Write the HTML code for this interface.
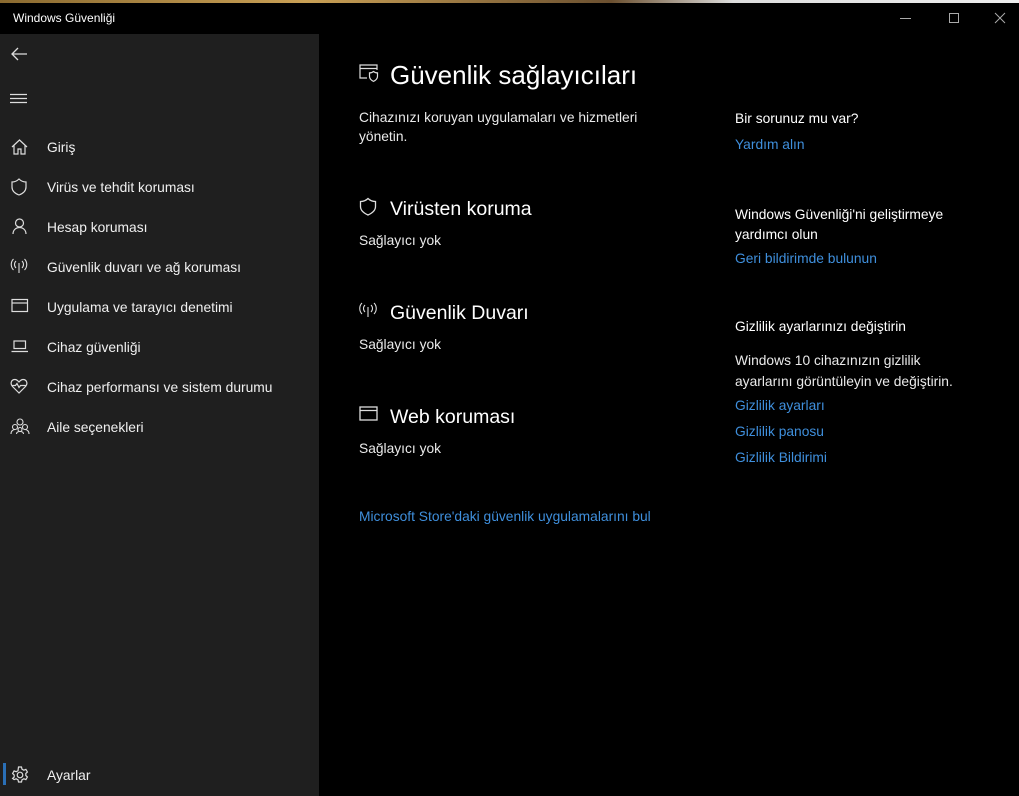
<!DOCTYPE html>
<html><head><meta charset="utf-8"><style>
*{margin:0;padding:0;box-sizing:border-box}
body{width:1019px;height:796px;background:#000;font-family:"Liberation Sans",sans-serif;color:#fff;position:relative;overflow:hidden}
.a{position:absolute;white-space:nowrap}
.top{position:absolute;left:0;top:0;width:1019px;height:3px;background:linear-gradient(90deg,#8a6a30,#c9a055 30%,#6b5030 60%,#ddd 72%,#eee)}
.side{position:absolute;left:0;top:34px;width:319px;height:762px;background:#1f1f1f}
.nav{font-size:13.8px;color:#f0f0f0}
.ic{position:absolute}
.lk{color:#3f8fdc;font-size:13.8px}
.t{font-size:13.8px;color:#eaeaea}
.h2{font-size:19.5px;color:#fff}
</style></head><body>
<div class="top"></div>
<div class="a" style="left:13px;top:11px;font-size:12px;color:#fff">Windows Güvenliği</div>
<svg class="ic" style="left:900px;top:12px" width="110" height="14" fill="none" stroke="#aaa" stroke-width="1"><path d="M0 6.5h11"/><rect x="49.5" y="1.5" width="9" height="9"/><path d="M95 1l10 10M105 1l-10 10"/></svg>
<div class="side"></div>
<svg class="ic" style="left:10px;top:46px" width="18" height="16" fill="none" stroke="#ddd" stroke-width="1.3"><path d="M17 8H2M8 2L2 8l6 6"/></svg>
<svg class="ic" style="left:10px;top:93px" width="18" height="12" stroke="#ddd" stroke-width="1.2"><path d="M0 1.5h17M0 5.5h17M0 9.5h17"/></svg>
<svg class="ic" style="left:11px;top:139px" width="17" height="16" fill="none" stroke="#ddd" stroke-width="1.2"><path d="M1 8L8.5 1 16 8M3 6.5V15h4v-5h3v5h4V6.5"/></svg>
<div class="a nav" style="left:47px;top:140px">Giriş</div>
<svg class="ic" style="left:11px;top:178px" width="16" height="18" fill="none" stroke="#ddd" stroke-width="1.2"><path d="M8 1C6 3 3 4 1 4v5c0 4 3 6.5 7 8 4-1.5 7-4 7-8V4c-2 0-5-1-7-3z"/></svg>
<div class="a nav" style="left:47px;top:180px">Virüs ve tehdit koruması</div>
<svg class="ic" style="left:12px;top:218px" width="16" height="17" fill="none" stroke="#ddd" stroke-width="1.2"><circle cx="7.5" cy="5" r="4"/><path d="M1 16c0-4 3-6.5 6.5-6.5S14 12 14 16"/></svg>
<div class="a nav" style="left:47px;top:220px">Hesap koruması</div>
<svg class="ic" style="left:10px;top:258px" width="18" height="16" fill="none" stroke="#ddd" stroke-width="1.1"><path d="M9 5v10M6 3c-2 2-2 5 0 7M12 3c2 2 2 5 0 7M3.5 1c-3 3-3 8 0 11M14.5 1c3 3 3 8 0 11"/></svg>
<div class="a nav" style="left:47px;top:260px">Güvenlik duvarı ve ağ koruması</div>
<svg class="ic" style="left:11px;top:298px" width="18" height="16" fill="none" stroke="#ddd" stroke-width="1.2"><rect x="1" y="1.5" width="15.5" height="12"/><path d="M1 5h15.5"/></svg>
<div class="a nav" style="left:47px;top:300px">Uygulama ve tarayıcı denetimi</div>
<svg class="ic" style="left:11px;top:340px" width="18" height="14" fill="none" stroke="#ddd" stroke-width="1.2"><rect x="3" y="1" width="11.5" height="7.5"/><path d="M0.5 11.5h16.5"/></svg>
<div class="a nav" style="left:47px;top:340px">Cihaz güvenliği</div>
<svg class="ic" style="left:10px;top:378px" width="18" height="16" fill="none" stroke="#ddd" stroke-width="1.2"><path d="M9 15L2.5 8.5C0 6 1 1.5 5 1.5c2 0 3 1.5 4 2.5 1-1 2-2.5 4-2.5 4 0 5 4.5 2.5 7z"/><path d="M1.5 7.5h4l1.5-2 2 4 1.5-2h6"/></svg>
<div class="a nav" style="left:47px;top:380px">Cihaz performansı ve sistem durumu</div>
<svg class="ic" style="left:10px;top:418px" width="20" height="17" fill="none" stroke="#ddd" stroke-width="1.1"><circle cx="10" cy="4" r="3"/><circle cx="5" cy="9" r="2.5"/><circle cx="15" cy="9" r="2.5"/><circle cx="10" cy="11.5" r="2"/><path d="M1 16c0-3 2-4.5 4-4.5M19 16c0-3-2-4.5-4-4.5M6.5 16c0-2 1.5-2.5 3.5-2.5s3.5.5 3.5 2.5"/></svg>
<div class="a nav" style="left:47px;top:420px">Aile seçenekleri</div>
<div class="a" style="left:3px;top:763px;width:3px;height:22px;background:#2a6fb6"></div>
<svg class="ic" style="left:11px;top:766px" width="18" height="18" fill="none" stroke="#ddd" stroke-width="1.2"><circle cx="9" cy="9" r="2.8"/><path d="M7.5 1h3l.5 2.2 1.8 1 2.1-.8 1.5 2.6-1.6 1.5v2l1.6 1.5-1.5 2.6-2.1-.8-1.8 1-.5 2.2h-3l-.5-2.2-1.8-1-2.1.8L1.6 12.5l1.6-1.5v-2L1.6 7.5 3.1 4.9l2.1.8 1.8-1z"/></svg>
<div class="a nav" style="left:47px;top:768px">Ayarlar</div>

<svg class="ic" style="left:359px;top:64px" width="22" height="20" fill="none" stroke="#ddd" stroke-width="1.2"><path d="M8 14H1V1h17v5M1 4.5h17"/><path d="M14.5 7.5c-1.2 1-2.5 1.4-4 1.4v3.5c0 2.5 2 4 4 5 2-1 4-2.5 4-5V8.9c-1.5 0-2.8-.4-4-1.4z"/></svg>
<div class="a" style="left:390px;top:60px;font-size:26px">Güvenlik sağlayıcıları</div>
<div class="a t" style="left:359px;top:108px;line-height:19px">Cihazınızı koruyan uygulamaları ve hizmetleri<br>yönetin.</div>
<svg class="ic" style="left:359px;top:197px" width="18" height="20" fill="none" stroke="#ddd" stroke-width="1.3"><path d="M9 1.5C7 3.5 4 4.5 1.5 4.5v5c0 4 3 6.5 7.5 8.5 4.5-2 7.5-4.5 7.5-8.5v-5C14 4.5 11 3.5 9 1.5z"/></svg>
<div class="a h2" style="left:390px;top:198px">Virüsten koruma</div>
<div class="a t" style="left:359px;top:233px">Sağlayıcı yok</div>
<svg class="ic" style="left:358px;top:302px" width="20" height="16" fill="none" stroke="#ddd" stroke-width="1.1"><path d="M10 5v10M7 3c-2 2-2 5 0 7M13 3c2 2 2 5 0 7M4 1c-3 3-3 8 0 11M16 1c3 3 3 8 0 11"/></svg>
<div class="a h2" style="left:390px;top:302px">Güvenlik Duvarı</div>
<div class="a t" style="left:359px;top:337px">Sağlayıcı yok</div>
<svg class="ic" style="left:359px;top:406px" width="20" height="16" fill="none" stroke="#ddd" stroke-width="1.3"><rect x="1" y="1" width="17" height="13"/><path d="M1 4.5h17"/></svg>
<div class="a h2" style="left:390px;top:406px">Web koruması</div>
<div class="a t" style="left:359px;top:441px">Sağlayıcı yok</div>
<div class="a lk" style="left:359px;top:509px">Microsoft Store'daki güvenlik uygulamalarını bul</div>

<div class="a t" style="left:735px;top:111px;color:#fff">Bir sorunuz mu var?</div>
<div class="a lk" style="left:735px;top:137px">Yardım alın</div>
<div class="a t" style="left:735px;top:205px;line-height:20px;color:#fff">Windows Güvenliği'ni geliştirmeye<br>yardımcı olun</div>
<div class="a lk" style="left:735px;top:251px">Geri bildirimde bulunun</div>
<div class="a t" style="left:735px;top:319px;color:#fff">Gizlilik ayarlarınızı değiştirin</div>
<div class="a t" style="left:735px;top:350px;line-height:21px">Windows 10 cihazınızın gizlilik<br>ayarlarını görüntüleyin ve değiştirin.</div>
<div class="a lk" style="left:735px;top:398px">Gizlilik ayarları</div>
<div class="a lk" style="left:735px;top:424px">Gizlilik panosu</div>
<div class="a lk" style="left:735px;top:450px">Gizlilik Bildirimi</div>
</body></html>
